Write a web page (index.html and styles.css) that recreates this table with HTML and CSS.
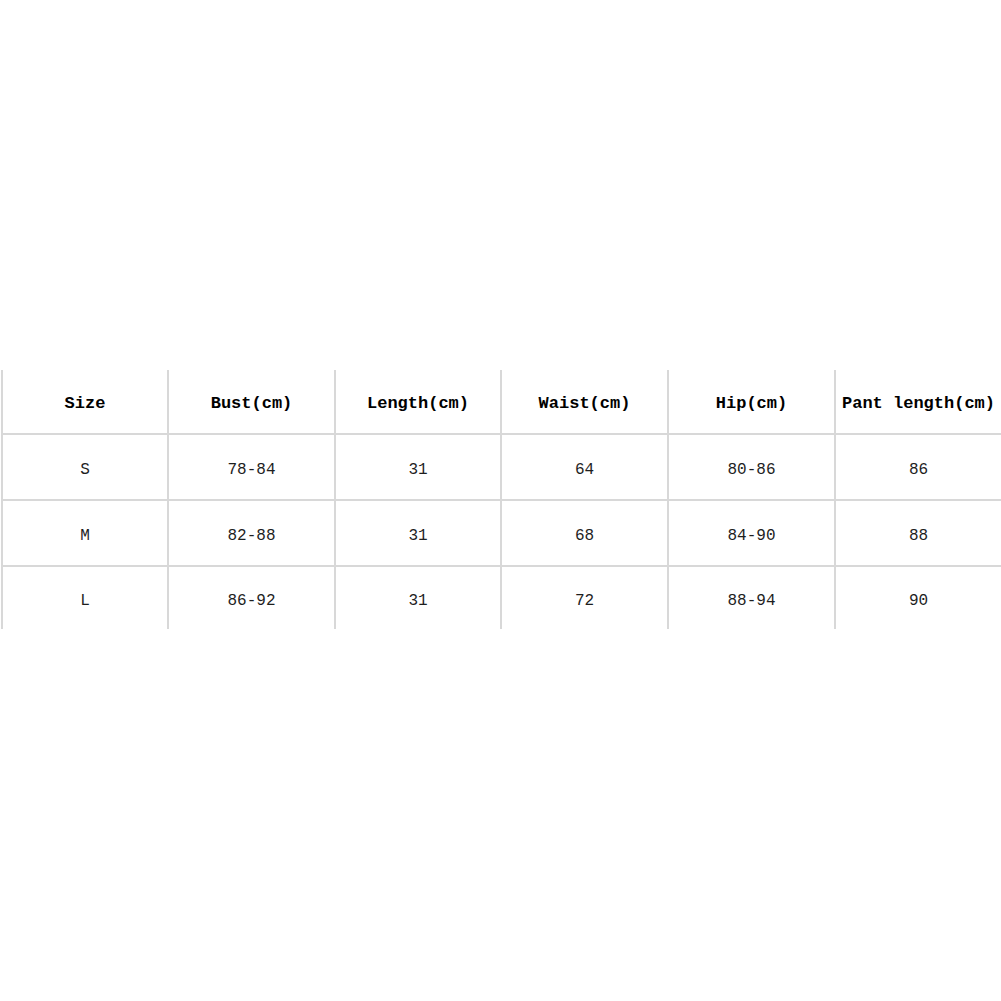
FILE: index.html
```html
<!DOCTYPE html>
<html>
<head>
<meta charset="utf-8">
<link rel="stylesheet" href="styles.css">
</head>
<body>
<div class="page">
  <div class="table">
    <div class="row head">
      <div class="cell">Size</div>
      <div class="cell">Bust(cm)</div>
      <div class="cell">Length(cm)</div>
      <div class="cell">Waist(cm)</div>
      <div class="cell">Hip(cm)</div>
      <div class="cell">Pant length(cm)</div>
    </div>
    <div class="row">
      <div class="cell">S</div>
      <div class="cell">78-84</div>
      <div class="cell">31</div>
      <div class="cell">64</div>
      <div class="cell">80-86</div>
      <div class="cell">86</div>
    </div>
    <div class="row">
      <div class="cell">M</div>
      <div class="cell">82-88</div>
      <div class="cell">31</div>
      <div class="cell">68</div>
      <div class="cell">84-90</div>
      <div class="cell">88</div>
    </div>
    <div class="row last">
      <div class="cell">L</div>
      <div class="cell">86-92</div>
      <div class="cell">31</div>
      <div class="cell">72</div>
      <div class="cell">88-94</div>
      <div class="cell">90</div>
    </div>
  </div>
</div>
</body>
</html>
```
FILE: styles.css
```css
html, body {
  margin: 0;
  padding: 0;
  background: #ffffff;
}
.page {
  width: 1001px;
  height: 1001px;
  padding-top: 370px;
  padding-left: 1px;
  box-sizing: border-box;
  font-family: "Liberation Mono", "DejaVu Sans Mono", monospace;
}
.table {
  width: 1000px;
  display: flex;
  flex-direction: column;
}
.row {
  display: grid;
  grid-template-columns: 166px 167px 166px 167px 167px 167px;
  height: 64px;
  border-top: 2px solid #d8d8d8;
  font-size: 16px;
  color: #1e1e1e;
}
.row.head {
  height: 63px;
  border-top: none;
  font-size: 17px;
  font-weight: bold;
  color: #000;
}
.row.last {
  height: 62px;
}
.cell {
  border-left: 2px solid #d8d8d8;
  display: flex;
  align-items: center;
  justify-content: center;
  white-space: nowrap;
  padding-top: 5px;
}
.row.head .cell {
  padding-top: 4px;
}
```
